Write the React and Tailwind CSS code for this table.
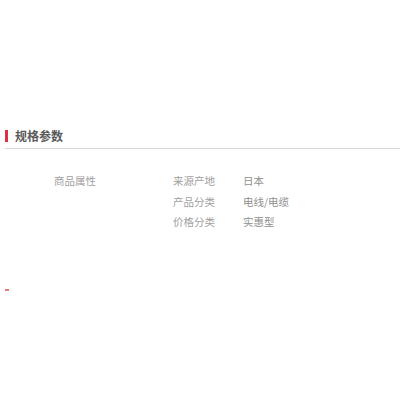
import React from 'react';

const rows = [
  { label: '来源产地', value: '日本' },
  { label: '产品分类', value: '电线/电缆' },
  { label: '价格分类', value: '实惠型' },
];

const App = () => {
  return (
    <div className="w-[400px] h-[400px] bg-white overflow-hidden" style={{ fontFamily: '"Noto Sans CJK SC", "Liberation Sans", sans-serif' }}>
      <div className="pt-[128px] pl-[5px]">
        <div className="flex items-center gap-[7px] h-[16px]">
          <span className="w-[3px] h-[12px] bg-[#d9343f]" />
          <h2 className="text-[12px] font-bold text-[#5a5a5a] leading-none">规格参数</h2>
        </div>
        <div className="mt-[4px] border-b border-[#d8d8d8]" />

        <div className="flex pt-[22px]">
          <div className="w-[168px] pl-[49px] text-[10.5px] text-[#a0a0a0] leading-[20px]">商品属性</div>
          <div className="flex flex-col">
            {rows.map((row, i) => (
              <div key={i} className="flex text-[10.5px] leading-[20.5px]">
                <span className="w-[70px] text-[#a0a0a0]">{row.label}</span>
                <span className="text-[#909090]">{row.value}</span>
              </div>
            ))}
          </div>
        </div>

        <div className="mt-[56px] w-[4px] h-[2px] bg-[#e57a80]" />
      </div>
    </div>
  );
};

export default App;
